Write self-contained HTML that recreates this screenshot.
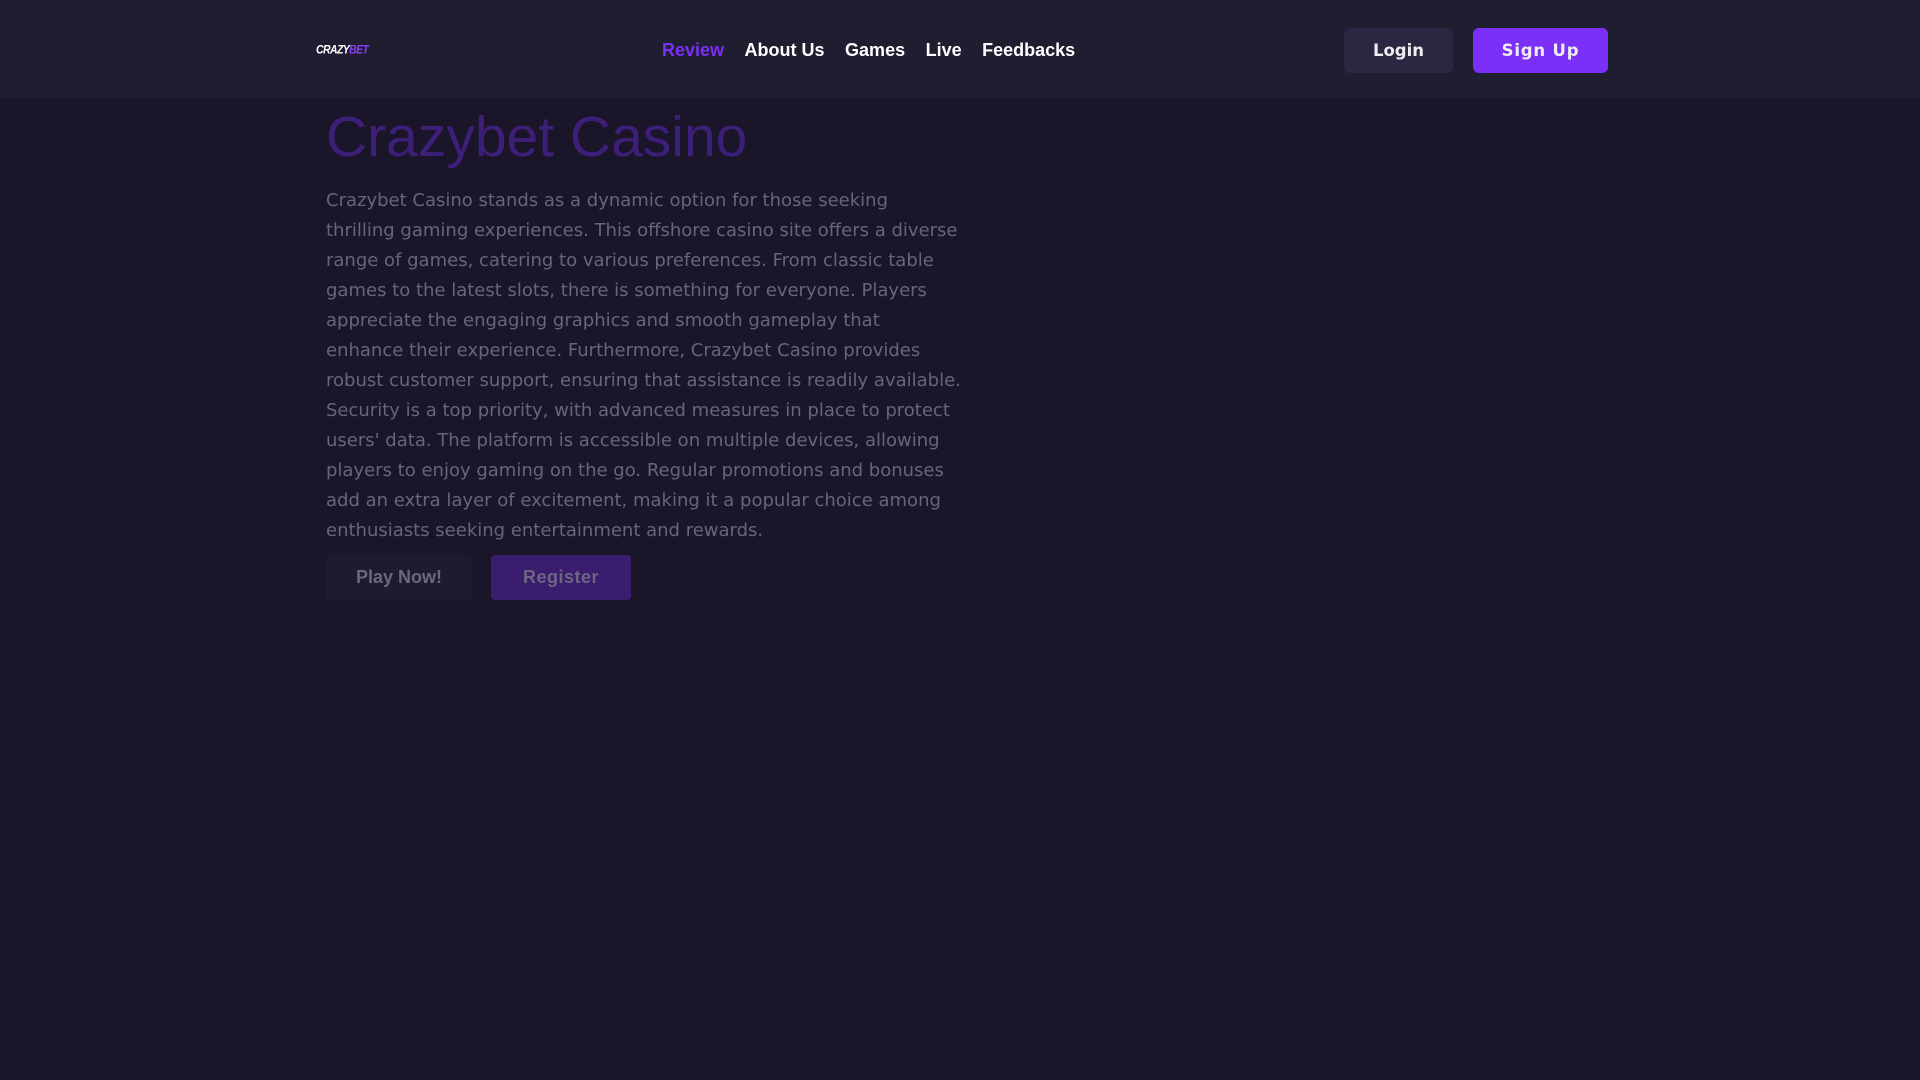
<!DOCTYPE html>
<html><head><meta charset="utf-8"><style>
*{margin:0;padding:0;box-sizing:border-box}
body{width:1920px;height:1080px;background:#1a1529;overflow:hidden;font-family:"Liberation Sans",sans-serif}
header{position:absolute;left:0;top:0;width:1920px;height:98px;background:#1f1d30}
.logo{position:absolute;left:316px;top:44px;font:italic 900 10.5px "Liberation Sans",sans-serif;letter-spacing:-0.6px;color:#fff;transform:scaleY(1.15)}
.logo span{color:#8a3cff}
nav{position:absolute;left:662px;top:40px;font-weight:bold;font-size:18px;color:#fff;white-space:nowrap;display:flex;gap:20.5px}
nav a.act{color:#7b2ff7}
.btn{position:absolute;top:28px;height:45px;border-radius:6px;color:#eee;font:bold 16.5px "DejaVu Sans",sans-serif;display:flex;align-items:center;justify-content:center}
h1{position:absolute;left:326px;top:104px;font-weight:normal;font-size:57px;color:#3d1f7a;white-space:nowrap}
p{position:absolute;left:326px;top:186px;white-space:nowrap;font:18px/30px "DejaVu Sans",sans-serif;color:#6a6478}
.hb{position:absolute;top:555px;height:45px;border-radius:4px;font-weight:bold;font-size:18px;color:#6c6680;display:flex;align-items:center;justify-content:center}
</style></head><body>
<header>
<div class="logo">CRAZY<span>BET</span></div>
<nav><a class="act">Review</a><a>About Us</a><a>Games</a><a>Live</a><a>Feedbacks</a></nav>
<div class="btn" style="left:1344px;width:109px;background:#2b2641">Login</div>
<div class="btn" style="left:1473px;width:135px;background:#7b2ff7;letter-spacing:.8px">Sign Up</div>
</header>
<h1>Crazybet Casino</h1>
<p>Crazybet Casino stands as a dynamic option for those seeking<br>thrilling gaming experiences. This offshore casino site offers a diverse<br>range of games, catering to various preferences. From classic table<br>games to the latest slots, there is something for everyone. Players<br>appreciate the engaging graphics and smooth gameplay that<br>enhance their experience. Furthermore, Crazybet Casino provides<br>robust customer support, ensuring that assistance is readily available.<br>Security is a top priority, with advanced measures in place to protect<br>users' data. The platform is accessible on multiple devices, allowing<br>players to enjoy gaming on the go. Regular promotions and bonuses<br>add an extra layer of excitement, making it a popular choice among<br>enthusiasts seeking entertainment and rewards.</p>
<div class="hb" style="left:326px;width:146px;background:#1f1b2e">Play Now!</div>
<div class="hb" style="left:491px;width:140px;background:#3a1d6e;letter-spacing:.5px">Register</div>
</body></html>
